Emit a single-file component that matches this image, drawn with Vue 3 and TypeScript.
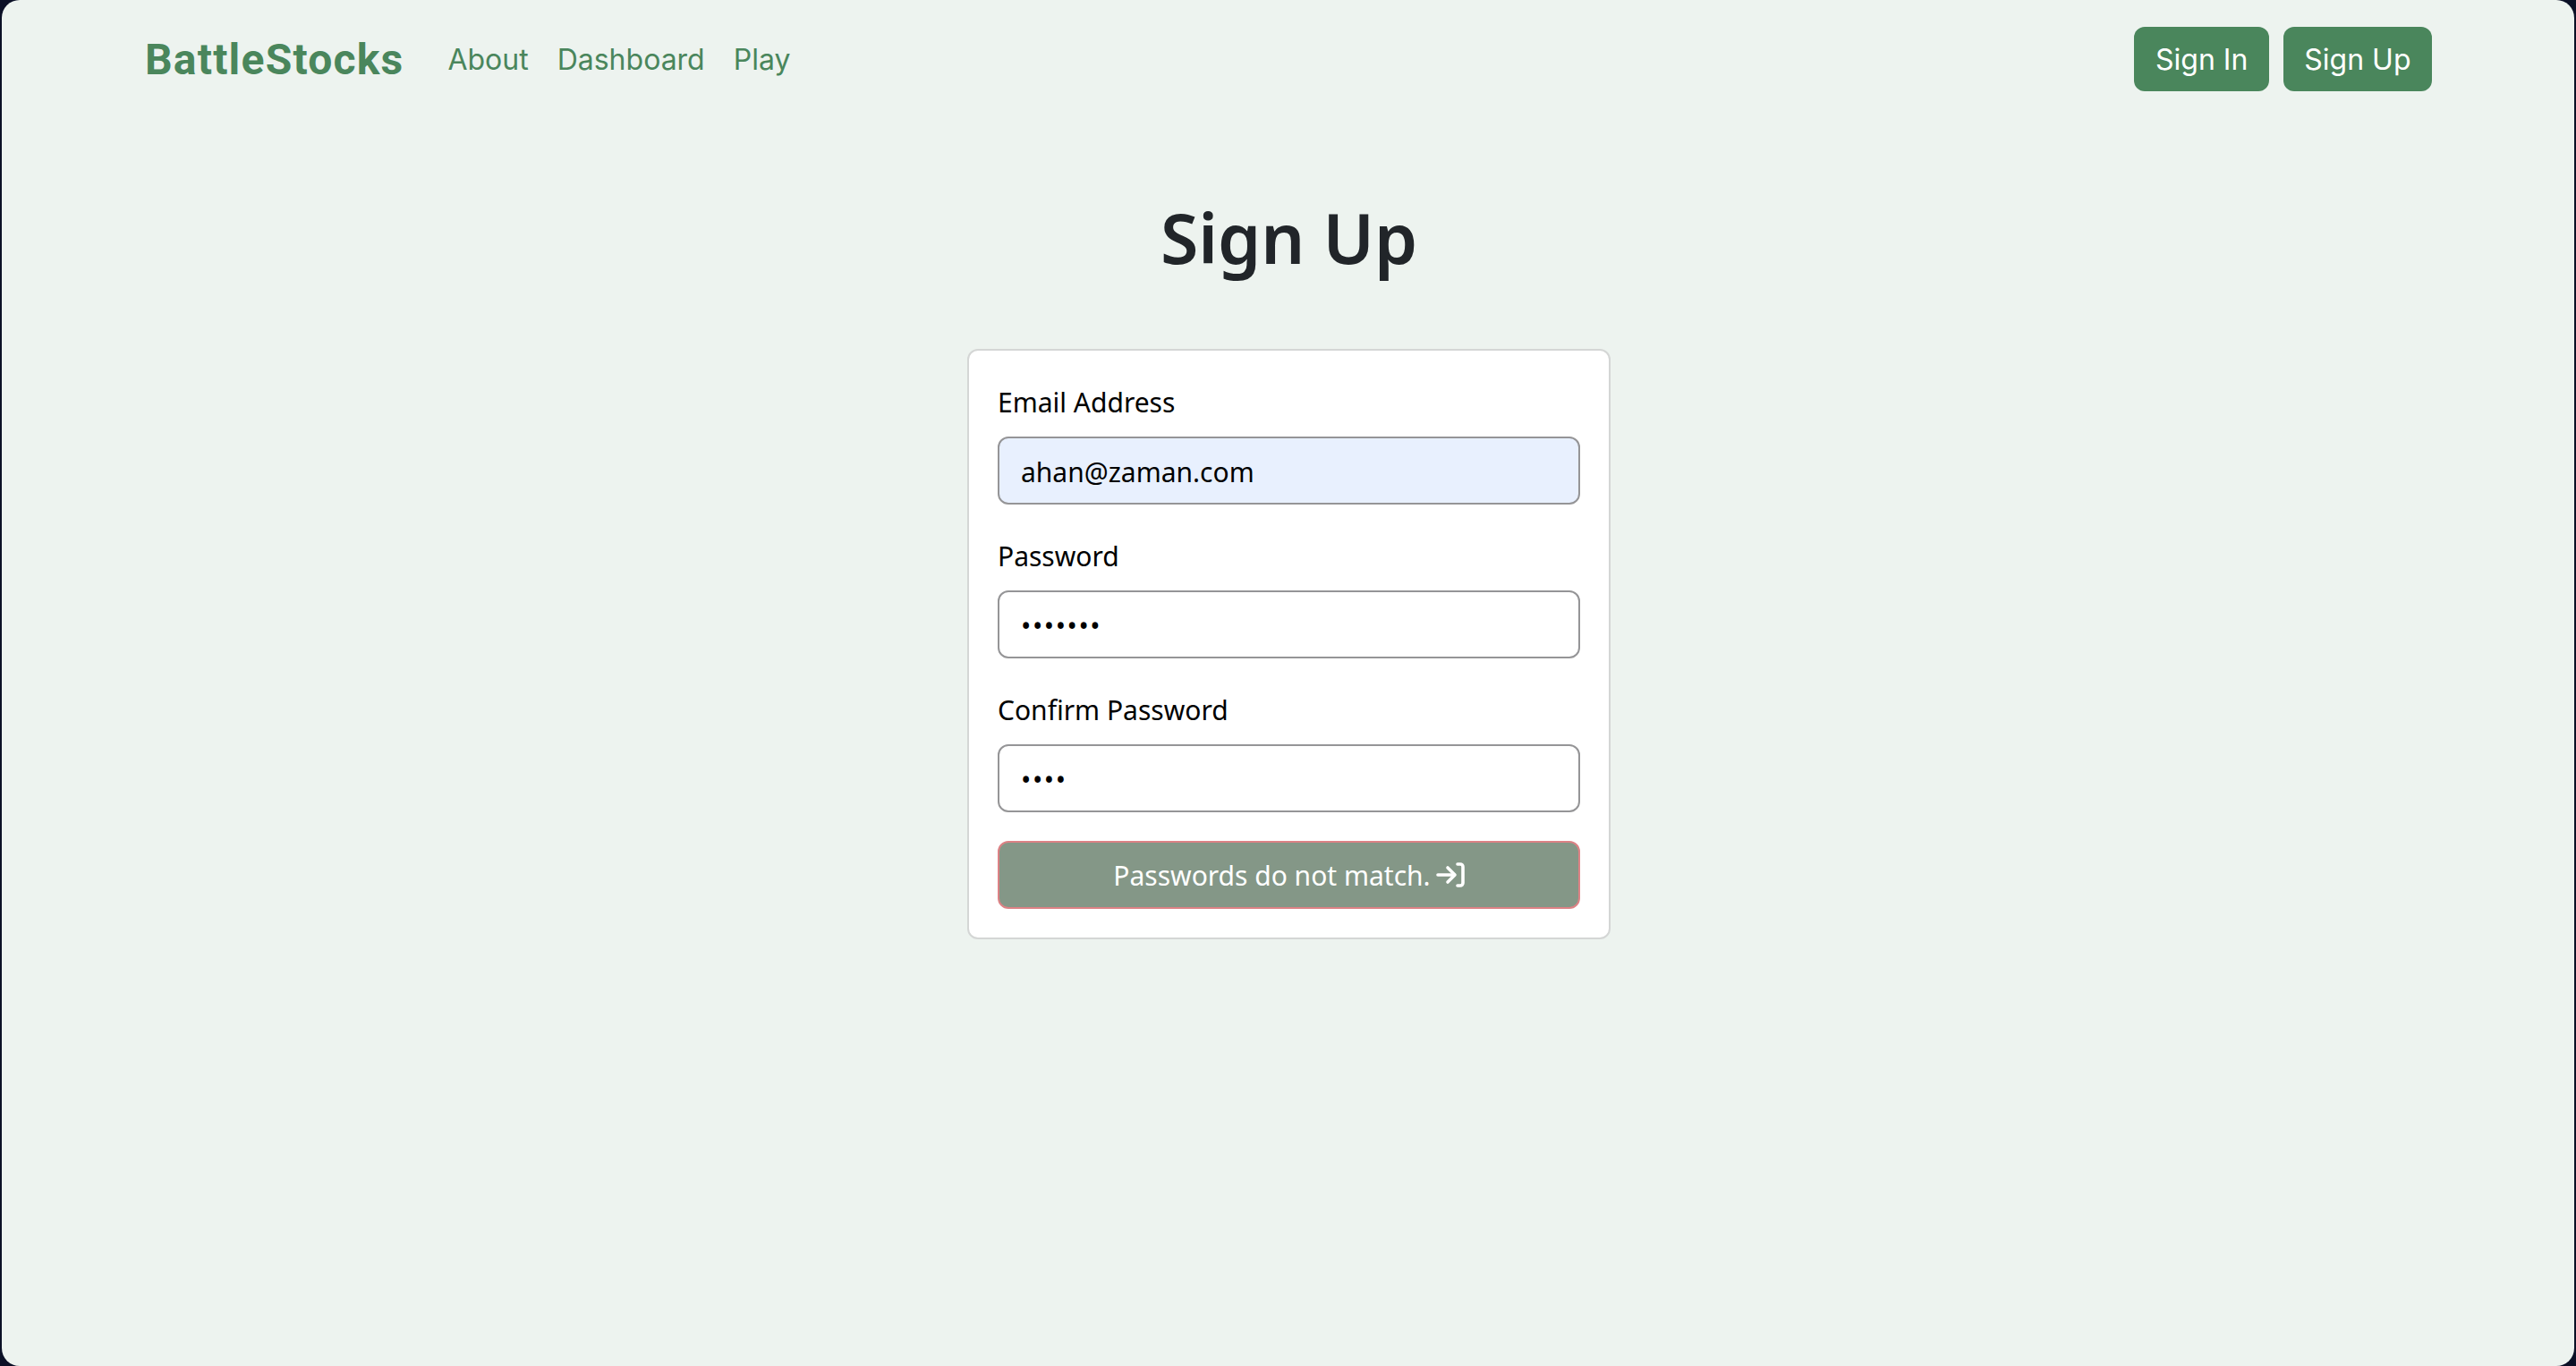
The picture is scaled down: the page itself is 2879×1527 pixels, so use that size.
<script setup lang="ts">
const links = ['About', 'Dashboard', 'Play']
</script>

<template>
  <div class="page">
    <nav class="topbar">
      <div class="left">
        <a class="brand">BattleStocks</a>
        <a v-for="link in links" :key="link" class="link">{{ link }}</a>
      </div>
      <div class="actions">
        <button class="nav-btn" type="button">Sign In</button>
        <button class="nav-btn" type="button">Sign Up</button>
      </div>
    </nav>

    <main class="content">
      <h1>Sign Up</h1>
      <form class="card" @submit.prevent>
        <div class="field">
          <label for="email">Email Address</label>
          <input id="email" class="autofilled" type="email" value="ahan@zaman.com" />
        </div>
        <div class="field">
          <label for="password">Password</label>
          <input id="password" type="password" value="1234567" />
        </div>
        <div class="field">
          <label for="confirm">Confirm Password</label>
          <input id="confirm" type="password" value="1234" />
        </div>
        <button class="submit" type="submit" disabled>
          <span>Passwords do not match.</span>
          <svg width="32" height="28" viewBox="0 0 32 28" fill="none" stroke="currentColor" stroke-width="3.6" stroke-linecap="round" stroke-linejoin="round">
            <path d="M2 14h18" />
            <path d="M13 6l8 8-8 8" />
            <path d="M24 2h3a3 3 0 0 1 3 3v18a3 3 0 0 1-3 3h-3" />
          </svg>
        </button>
      </form>
    </main>
  </div>
</template>

<style>
html,
body {
  margin: 0;
  background: #0b1026;
}
</style>

<style scoped>
.page {
  box-sizing: border-box;
  height: 1527px;
  margin: 0 2px;
  background: #edf3ef;
  border-radius: 20px;
  overflow: hidden;
}
.topbar {
  display: flex;
  justify-content: space-between;
  align-items: center;
  padding: 30px 159px 0 160px;
  font-family: Inter, sans-serif;
}
.left {
  display: flex;
  align-items: center;
}
.brand {
  margin-right: 49px;
  font-family: Roboto, sans-serif;
  font-size: 48px;
  font-weight: 700;
  letter-spacing: 1.2px;
  color: #4a865c;
}
.link {
  margin-right: 32px;
  font-size: 32px;
  color: #4a865c;
}
.actions {
  display: flex;
  gap: 16px;
}
.nav-btn {
  height: 72px;
  padding: 0 23.5px;
  border: 0;
  border-radius: 12px;
  background: #4a865c;
  color: #fff;
  font-family: Inter, sans-serif;
  font-size: 32px;
}
.content {
  display: flex;
  flex-direction: column;
  align-items: center;
  padding-left: 2px;
  font-family: 'Noto Sans', sans-serif;
}
h1 {
  margin: 116px 0 76px;
  font-size: 77px;
  line-height: 96px;
  font-weight: 560;
  color: #212529;
}
.card {
  box-sizing: border-box;
  display: flex;
  flex-direction: column;
  width: 719px;
  padding: 36px 32px 32px;
  background: #fff;
  border: 2px solid #d4d6d5;
  border-radius: 12px;
}
.field {
  display: flex;
  flex-direction: column;
  margin-bottom: 36px;
}
.field:last-of-type {
  margin-bottom: 32px;
}
label {
  margin-bottom: 16px;
  font-size: 30px;
  line-height: 44px;
  color: #000;
}
input {
  box-sizing: border-box;
  height: 76px;
  padding: 2px 24px 0;
  border: 2px solid #959597;
  border-radius: 12px;
  background: #fff;
  color: #000;
  font-family: inherit;
  font-size: 30px;
  outline: none;
}
input[type='password'] {
  letter-spacing: 1.6px;
}
.autofilled {
  background: #e8f0fe;
}
.submit {
  display: flex;
  justify-content: center;
  align-items: center;
  gap: 6px;
  height: 76px;
  border: 2px solid #dc8285;
  border-radius: 12px;
  background: #849787;
  color: #fff;
  font-family: inherit;
  font-size: 30px;
}
</style>
